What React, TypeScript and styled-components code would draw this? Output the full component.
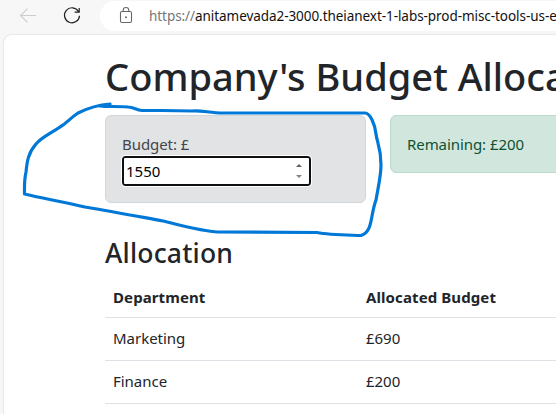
import React from "react";
import styled, { createGlobalStyle } from "styled-components";

const GlobalStyle = createGlobalStyle`
  * { box-sizing: border-box; }
  html, body { margin: 0; overflow: hidden; }
  body {
    background: #f7f7f7;
    color: #212529;
    font-family: "Noto Sans", "Open Sans", sans-serif;
    font-size: 15px;
    line-height: 24px;
  }
`;

const Window = styled.div`
  position: relative;
  width: 556px;
  height: 414px;
  overflow: hidden;
  display: flex;
  flex-direction: column;
`;

const Toolbar = styled.header`
  flex: none;
  height: 35px;
  display: flex;
  align-items: flex-start;
  padding-top: 1px;
`;

const NavButton = styled.span<{ $width: number; $left: number }>`
  flex: none;
  width: ${(p) => p.$width}px;
  height: 30px;
  padding-left: ${(p) => p.$left}px;
`;

const AddressBar = styled.div`
  flex: none;
  width: 480px;
  height: 30px;
  display: flex;
  padding-left: 17px;
  background: #fff;
  border-radius: 15px;
`;

const Url = styled.span`
  margin-left: 13px;
  font-size: 13.5px;
  line-height: 30px;
  letter-spacing: -0.06px;
  white-space: nowrap;
  color: #111;
`;

const Scheme = styled.span`
  color: #767676;
`;

const Page = styled.main`
  flex: 1;
  width: 560px;
  margin-left: 4px;
  padding: 17px 0 0 101px;
  background: #fff;
  border-radius: 8px 0 0 0;
  box-shadow: 0 0 2px rgba(0, 0, 0, 0.2);
`;

const Title = styled.h1`
  margin: 0 0 15px;
  font-size: 38px;
  line-height: 48px;
  font-weight: 500;
  letter-spacing: 0.02px;
  white-space: nowrap;
`;

const Cards = styled.div`
  display: flex;
  align-items: flex-start;
  gap: 24px;
  height: 122px;
`;

const Card = styled.div<{ $tone: "neutral" | "success" }>`
  flex: none;
  width: 261px;
  padding: 16px;
  border-radius: 6px;
  letter-spacing: -0.07px;
  border: 1px solid ${(p) => (p.$tone === "success" ? "#badbcc" : "#d3d6d8")};
  background: ${(p) => (p.$tone === "success" ? "#d1e7dd" : "#e2e3e5")};
  color: ${(p) => (p.$tone === "success" ? "#0f5132" : "#41464b")};
`;

const Field = styled.div`
  display: flex;
  align-items: center;
  justify-content: space-between;
  width: 189px;
  height: 30px;
  padding: 0 7px 0 2px;
  background: #fff;
  border: 2px solid #101010;
  border-radius: 3px;
  outline: 1px solid #fff;
  color: #000;
  letter-spacing: 0;
`;

const Section = styled.h3`
  margin: 0 0 6px;
  font-size: 26.5px;
  line-height: 33.6px;
  font-weight: 500;
  letter-spacing: 0.2px;
`;

const Table = styled.div`
  display: flex;
  flex-direction: column;
`;

const Row = styled.div<{ $head?: boolean }>`
  display: grid;
  grid-template-columns: 253px 253px;
  height: ${(p) => (p.$head ? 41.4 : 43)}px;
  padding-top: 8px;
  border-bottom: 1px solid #dee2e6;
  font-weight: ${(p) => (p.$head ? 700 : 400)};
  letter-spacing: ${(p) => (p.$head ? "0.1px" : "-0.02px")};
`;

const Cell = styled.span`
  padding-left: 8px;
`;

const Ink = styled.svg`
  position: absolute;
  inset: 0;
  pointer-events: none;
`;

const departments = [
  { name: "Marketing", budget: "£690" },
  { name: "Finance", budget: "£200" },
];

export default function App() {
  return (
    <Window>
      <GlobalStyle />
      <Toolbar>
        <NavButton $width={60} $left={18}>
          <svg width="20" height="30" fill="none" stroke="#cdcdcd" strokeWidth="1.1">
            <path d="M18 14.5H2.5M9.5 7.7L2.5 14.5l7 6.8" />
          </svg>
        </NavButton>
        <NavButton $width={40} $left={2}>
          <svg width="20" height="30" fill="none" stroke="#202020" strokeWidth="1.2">
            <path d="M16.5 10.5A7.5 7.5 0 1 0 17.5 14.7M17.2 7v4.2h-4.6" />
          </svg>
        </NavButton>
        <AddressBar>
          <svg width="19" height="30" fill="none" stroke="#666" strokeWidth="1.1">
            <rect x="3.5" y="10.5" width="11" height="11" rx="1.5" />
            <path d="M6.2 10.5V9.3a2.8 2.8 0 0 1 5.6 0v1.2" />
            <circle cx="9" cy="16.2" r="1" fill="#666" stroke="none" />
          </svg>
          <Url>
            <Scheme>https://</Scheme>anitamevada2-3000.theianext-1-labs-prod-misc-tools-us-e
          </Url>
        </AddressBar>
      </Toolbar>
      <Page>
        <Title>Company's Budget Alloca</Title>
        <Cards>
          <Card $tone="neutral">
            Budget: £
            <Field>
              <span>1550</span>
              <svg width="6" height="18">
                <path d="M0 5L3 2l3 3z" fill="#606060" />
                <path d="M0 13L3 16l3-3z" fill="#858585" />
              </svg>
            </Field>
          </Card>
          <Card $tone="success">Remaining: £200</Card>
        </Cards>
        <Section>Allocation</Section>
        <Table>
          <Row $head>
            <Cell>Department</Cell>
            <Cell>Allocated Budget</Cell>
          </Row>
          {departments.map((d) => (
            <Row key={d.name}>
              <Cell>{d.name}</Cell>
              <Cell>{d.budget}</Cell>
            </Row>
          ))}
        </Table>
      </Page>
      <Ink width="556" height="414" fill="none" stroke="#0078d7" strokeWidth="3.2" strokeLinecap="round" strokeLinejoin="round">
        <path d="M110 104C97 105 86 109 78 113C69 119 67 123 60 127C50 134 42 137 36 144C28 153 27 162 26 172C24 181 24.5 188 24.5 194C40 198 65 202 85 207C115 212 141 217 163 221C184 226 201 231 218 232L317 232.5C329 235 347 235 361 235.5C373 232 370 216 376 200C378 188 381 176 381 165C381 147 377 143 376 134C375 124 370 113 365 113H223C210 113 201 110 192 111L162 110.5H142C136 110 134 107 128 107C117 106 108 107 100 106L110 104" />
      </Ink>
    </Window>
  );
}
